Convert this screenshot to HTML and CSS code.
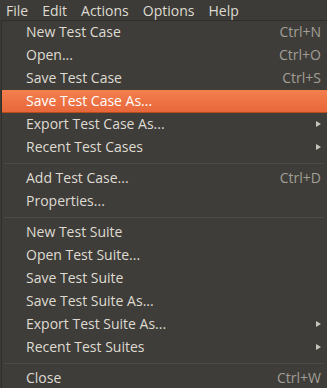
FILE: index.html
```html
<!DOCTYPE html>
<html lang="en">
<head>
  <meta charset="UTF-8" />
  <title>File menu</title>
  <link rel="stylesheet" href="styles.css">
</head>
<body>
  <div class="menubar">
    <span class="menubar-item">File</span>
    <span class="menubar-item">Edit</span>
    <span class="menubar-item">Actions</span>
    <span class="menubar-item">Options</span>
    <span class="menubar-item">Help</span>
  </div>

  <div class="menu">
    <div class="item"><span>New Test Case</span><span class="key">Ctrl+N</span></div>
    <div class="item"><span>Open...</span><span class="key">Ctrl+O</span></div>
    <div class="item"><span>Save Test Case</span><span class="key">Ctrl+S</span></div>
    <div class="item active"><span>Save Test Case As...</span></div>
    <div class="item"><span>Export Test Case As...</span><span class="arrow"></span></div>
    <div class="item"><span>Recent Test Cases</span><span class="arrow"></span></div>
    <div class="sep"></div>
    <div class="item"><span>Add Test Case...</span><span class="key">Ctrl+D</span></div>
    <div class="item"><span>Properties...</span></div>
    <div class="sep"></div>
    <div class="item"><span>New Test Suite</span></div>
    <div class="item"><span>Open Test Suite...</span></div>
    <div class="item"><span>Save Test Suite</span></div>
    <div class="item"><span>Save Test Suite As...</span></div>
    <div class="item"><span>Export Test Suite As...</span><span class="arrow"></span></div>
    <div class="item"><span>Recent Test Suites</span><span class="arrow"></span></div>
    <div class="sep"></div>
    <div class="item"><span>Close</span><span class="key">Ctrl+W</span></div>
  </div>
</body>
</html>
```

FILE: styles.css
```css
body {
  margin: 0;
  background: #3c3b37;
  font-family: 'Open Sans', 'DejaVu Sans', sans-serif;
  font-size: 14px;
  color: #dfdbd2;
  overflow: hidden;
}
.menubar {
  height: 20px;
  display: flex;
  align-items: center;
  gap: 2px;
  background: #3c3b37;
}
.menubar-item {
  padding: 0 6px;
  line-height: 19px;
}
.menu {
  margin-left: 1px;
  border-top: 1px solid #2f2e2b;
  border-left: 1px solid #2f2e2b;
  background: #3e3d39;
  height: 400px;
}
.item {
  height: 23px;
  display: flex;
  align-items: center;
  justify-content: space-between;
  padding: 0 6px 2px 24px;
  box-sizing: border-box;
}
.item.active {
  background: linear-gradient(#f37f4e, #e8673a);
  border-bottom: 1px solid #b84c1d;
  padding-bottom: 1px;
  color: #ffffff;
}
.key {
  color: #a29f97;
}
.arrow {
  width: 0;
  height: 0;
  border-top: 3.5px solid transparent;
  border-bottom: 3.5px solid transparent;
  border-left: 5px solid #c8c5bd;
}
.sep {
  height: 1px;
  margin: 4px 3px 3px 2px;
  background: #4b4a45;
}
```
